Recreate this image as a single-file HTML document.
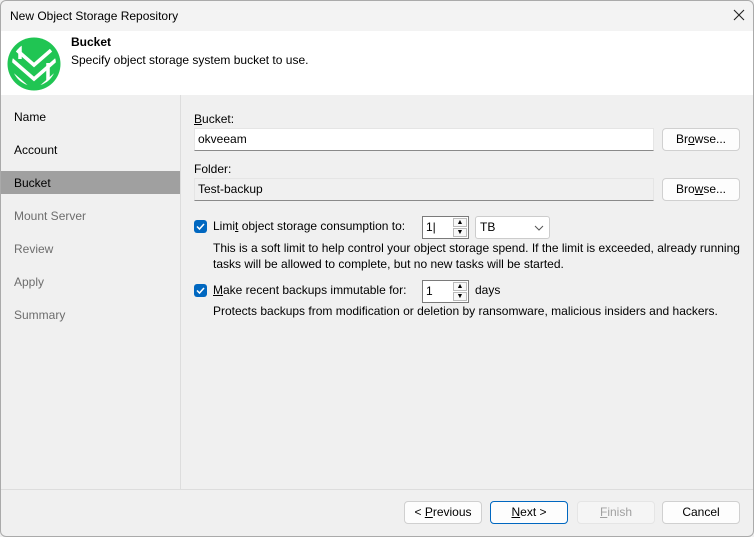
<html><head><style>
*{box-sizing:border-box;margin:0;padding:0}
body{width:754px;height:537px;overflow:hidden;font-family:"Liberation Sans",sans-serif;font-size:12px;color:#000;background:#f0f0f0;position:relative}
.a{position:absolute}
.btn{position:absolute;height:23px;border:1px solid #d0d0d0;border-radius:4px;background:#fdfdfd;text-align:center;line-height:21px;font-size:12px}
.inp{position:absolute;height:23px;background:#fff;border:1px solid #e5e5e5;border-bottom:1px solid #8a8a8a;padding-left:3px;line-height:21px}
.cb{position:absolute;width:13px;height:13px;background:#0067c0;border-radius:3px}
.spin{position:absolute;background:#fff;border:1px solid #7a7a7a;height:23px;line-height:21px;padding-left:3px}
.sp{position:absolute;right:1px;width:14px;height:9px;border:1px solid #bbb;background:#f8f8f8;font-size:7px;line-height:7px;text-align:center}
</style></head><body>
<div class="a" style="left:0;top:0;width:754px;height:537px;border:1px solid #aaa;border-radius:6px"></div>
<div class="a" style="top:1px;left:1px;width:752px;height:30px;background:#f3f3f3;border-radius:6px 6px 0 0"></div>
<div class="a" style="left:10px;top:9px;font-size:12px">New Object Storage Repository</div>
<svg class="a" style="left:733px;top:9px" width="12" height="12"><path d="M1 1 L11 11 M11 1 L1 11" stroke="#222" stroke-width="1.1"/></svg>
<div class="a" style="left:1px;top:31px;width:752px;height:64px;background:#fff"></div>
<svg class="a" style="left:7px;top:37px" width="54" height="54" viewBox="0 0 54 54">
<defs><clipPath id="c"><circle cx="27" cy="27" r="22"/></clipPath></defs>
<circle cx="27" cy="27" r="26.5" fill="#20c553"/>
<g stroke="#fff" stroke-width="3.5" fill="none" clip-path="url(#c)">
<path d="M4 8 L27 28 L50 8"/>
<path d="M4 22 L27 42 L50 22"/>
<path d="M4 36 L27 56 L50 36"/>
<path d="M13 4 L13 22"/>
<path d="M41 26 L41 50"/>
</g></svg>
<div class="a" style="left:71px;top:35px;font-weight:bold">Bucket</div>
<div class="a" style="left:71px;top:53px">Specify object storage system bucket to use.</div>
<div class="a" style="left:180px;top:95px;width:1px;height:394px;background:#ddd"></div>
<div class="a" style="left:1px;top:171px;width:179px;height:23px;background:#a0a0a0"></div>
<div class="a" style="left:14px;top:110px">Name</div>
<div class="a" style="left:14px;top:143px">Account</div>
<div class="a" style="left:14px;top:176px">Bucket</div>
<div class="a" style="left:14px;top:209px;color:#6d6d6d">Mount Server</div>
<div class="a" style="left:14px;top:242px;color:#6d6d6d">Review</div>
<div class="a" style="left:14px;top:275px;color:#6d6d6d">Apply</div>
<div class="a" style="left:14px;top:308px;color:#6d6d6d">Summary</div>
<div class="a" style="left:194px;top:112px"><u>B</u>ucket:</div>
<div class="inp" style="left:194px;top:128px;width:460px">okveeam</div>
<div class="btn" style="left:662px;top:128px;width:78px">Br<u>o</u>wse...</div>
<div class="a" style="left:194px;top:162px">Folder:</div>
<div class="inp" style="left:194px;top:178px;width:460px;background:#f0f0f0">Test-backup</div>
<div class="btn" style="left:662px;top:178px;width:78px">Bro<u>w</u>se...</div>
<div class="cb" style="left:194px;top:220px"><svg width="13" height="13"><path d="M3 6.5 L5.5 9 L10 4" stroke="#fff" stroke-width="1.5" fill="none"/></svg></div>
<div class="a" style="left:213px;top:219px">Limi<u>t</u> object storage consumption to:</div>
<div class="spin" style="left:422px;top:216px;width:47px">1|<div class="sp" style="top:1px">▲</div><div class="sp" style="top:11px">▼</div></div>
<div class="a" style="left:475px;top:216px;width:75px;height:23px;background:#fff;border:1px solid #ccc;border-radius:3px;padding-left:4px;line-height:21px">TB<svg style="position:absolute;right:5px;top:8px" width="10" height="6"><path d="M1 1 L5 5 L9 1" stroke="#555" fill="none"/></svg></div>
<div class="a" style="left:213px;top:240px;line-height:16px">This is a soft limit to help control your object storage spend. If the limit is exceeded, already running<br>tasks will be allowed to complete, but no new tasks will be started.</div>
<div class="cb" style="left:194px;top:284px"><svg width="13" height="13"><path d="M3 6.5 L5.5 9 L10 4" stroke="#fff" stroke-width="1.5" fill="none"/></svg></div>
<div class="a" style="left:213px;top:283px"><u>M</u>ake recent backups immutable for:</div>
<div class="spin" style="left:422px;top:280px;width:47px">1<div class="sp" style="top:1px">▲</div><div class="sp" style="top:11px">▼</div></div>
<div class="a" style="left:475px;top:283px">days</div>
<div class="a" style="left:213px;top:304px">Protects backups from modification or deletion by ransomware, malicious insiders and hackers.</div>
<div class="a" style="left:1px;top:489px;width:752px;height:1px;background:#ddd"></div>
<div class="btn" style="left:404px;top:501px;width:78px">&lt; <u>P</u>revious</div>
<div class="btn" style="left:490px;top:501px;width:78px;border-color:#0067c0"><u>N</u>ext &gt;</div>
<div class="btn" style="left:577px;top:501px;width:78px;background:#f5f5f5;border-color:#e5e5e5;color:#a0a0a0"><u>F</u>inish</div>
<div class="btn" style="left:662px;top:501px;width:78px">Cancel</div>
</body></html>
